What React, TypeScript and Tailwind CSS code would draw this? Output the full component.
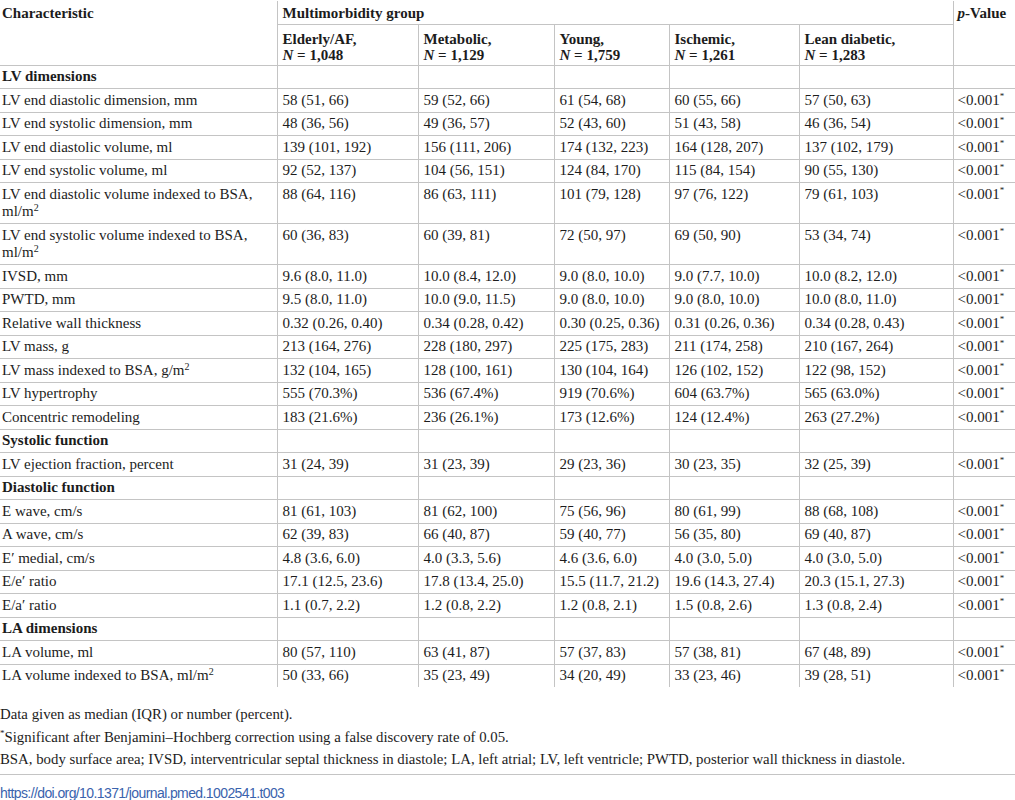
import React from "react";

type Row = {
  label: React.ReactNode;
  values?: string[];
  section?: boolean;
};

const P = (
  <>
    &lt;0.001<sup className="text-[9px] top-[-0.6em]">*</sup>
  </>
);

const m2 = <sup className="text-[10px] leading-none">2</sup>;

const rows: Row[] = [
  { label: "LV dimensions", section: true },
  { label: "LV end diastolic dimension, mm", values: ["58 (51, 66)", "59 (52, 66)", "61 (54, 68)", "60 (55, 66)", "57 (50, 63)"] },
  { label: "LV end systolic dimension, mm", values: ["48 (36, 56)", "49 (36, 57)", "52 (43, 60)", "51 (43, 58)", "46 (36, 54)"] },
  { label: "LV end diastolic volume, ml", values: ["139 (101, 192)", "156 (111, 206)", "174 (132, 223)", "164 (128, 207)", "137 (102, 179)"] },
  { label: "LV end systolic volume, ml", values: ["92 (52, 137)", "104 (56, 151)", "124 (84, 170)", "115 (84, 154)", "90 (55, 130)"] },
  { label: <>LV end diastolic volume indexed to BSA,<br />ml/m{m2}</>, values: ["88 (64, 116)", "86 (63, 111)", "101 (79, 128)", "97 (76, 122)", "79 (61, 103)"] },
  { label: <>LV end systolic volume indexed to BSA,<br />ml/m{m2}</>, values: ["60 (36, 83)", "60 (39, 81)", "72 (50, 97)", "69 (50, 90)", "53 (34, 74)"] },
  { label: "IVSD, mm", values: ["9.6 (8.0, 11.0)", "10.0 (8.4, 12.0)", "9.0 (8.0, 10.0)", "9.0 (7.7, 10.0)", "10.0 (8.2, 12.0)"] },
  { label: "PWTD, mm", values: ["9.5 (8.0, 11.0)", "10.0 (9.0, 11.5)", "9.0 (8.0, 10.0)", "9.0 (8.0, 10.0)", "10.0 (8.0, 11.0)"] },
  { label: "Relative wall thickness", values: ["0.32 (0.26, 0.40)", "0.34 (0.28, 0.42)", "0.30 (0.25, 0.36)", "0.31 (0.26, 0.36)", "0.34 (0.28, 0.43)"] },
  { label: "LV mass, g", values: ["213 (164, 276)", "228 (180, 297)", "225 (175, 283)", "211 (174, 258)", "210 (167, 264)"] },
  { label: <>LV mass indexed to BSA, g/m{m2}</>, values: ["132 (104, 165)", "128 (100, 161)", "130 (104, 164)", "126 (102, 152)", "122 (98, 152)"] },
  { label: "LV hypertrophy", values: ["555 (70.3%)", "536 (67.4%)", "919 (70.6%)", "604 (63.7%)", "565 (63.0%)"] },
  { label: "Concentric remodeling", values: ["183 (21.6%)", "236 (26.1%)", "173 (12.6%)", "124 (12.4%)", "263 (27.2%)"] },
  { label: "Systolic function", section: true },
  { label: "LV ejection fraction, percent", values: ["31 (24, 39)", "31 (23, 39)", "29 (23, 36)", "30 (23, 35)", "32 (25, 39)"] },
  { label: "Diastolic function", section: true },
  { label: "E wave, cm/s", values: ["81 (61, 103)", "81 (62, 100)", "75 (56, 96)", "80 (61, 99)", "88 (68, 108)"] },
  { label: "A wave, cm/s", values: ["62 (39, 83)", "66 (40, 87)", "59 (40, 77)", "56 (35, 80)", "69 (40, 87)"] },
  { label: "E\u2032 medial, cm/s", values: ["4.8 (3.6, 6.0)", "4.0 (3.3, 5.6)", "4.6 (3.6, 6.0)", "4.0 (3.0, 5.0)", "4.0 (3.0, 5.0)"] },
  { label: "E/e\u2032 ratio", values: ["17.1 (12.5, 23.6)", "17.8 (13.4, 25.0)", "15.5 (11.7, 21.2)", "19.6 (14.3, 27.4)", "20.3 (15.1, 27.3)"] },
  { label: "E/a\u2032 ratio", values: ["1.1 (0.7, 2.2)", "1.2 (0.8, 2.2)", "1.2 (0.8, 2.1)", "1.5 (0.8, 2.6)", "1.3 (0.8, 2.4)"] },
  { label: "LA dimensions", section: true },
  { label: "LA volume, ml", values: ["80 (57, 110)", "63 (41, 87)", "57 (37, 83)", "57 (38, 81)", "67 (48, 89)"] },
  { label: <>LA volume indexed to BSA, ml/m{m2}</>, values: ["50 (33, 66)", "35 (23, 49)", "34 (20, 49)", "33 (23, 46)", "39 (28, 51)"] },
];

const groups = [
  ["Elderly/AF,", "1,048"],
  ["Metabolic,", "1,129"],
  ["Young,", "1,759"],
  ["Ischemic,", "1,261"],
  ["Lean diabetic,", "1,283"],
];

const base = "border border-[#c4c4c4] px-[5px] text-left";
const cell = `${base} align-top py-[2.5px]`;

export default function App() {
  return (
    <div
      className="w-[1015px] bg-white text-[#1c1c1c] text-[15px] leading-[17.5px]"
      style={{ fontFamily: '"Liberation Serif", "Times New Roman", serif' }}
    >
      <table className="w-[1015px] table-fixed border-collapse border-hidden border-y border-y-[#c4c4c4] mt-px">
        <colgroup>
          <col className="w-[277px]" />
          <col className="w-[141px]" />
          <col className="w-[136px]" />
          <col className="w-[115px]" />
          <col className="w-[130px]" />
          <col className="w-[154px]" />
          <col className="w-[62px]" />
        </colgroup>
        <thead>
          <tr>
            <th rowSpan={2} className={`${base} align-top pt-[3.5px] pb-[2px] font-bold pl-[2px]`}>
              Characteristic
            </th>
            <th colSpan={5} className={`${base} align-top pt-[3.5px] pb-[1.5px] font-bold`}>
              Multimorbidity group
            </th>
            <th rowSpan={2} className={`${base} align-top pt-[3.5px] font-bold pl-[4px]`}>
              <i>p</i>-Value
            </th>
          </tr>
          <tr>
            {groups.map(([name, n]) => (
              <th
                key={name}
                className={`${base} align-bottom pt-[6px] pb-[1px] leading-[16.5px] font-bold`}
              >
                {name}
                <br />
                <i>N</i> = {n}
              </th>
            ))}
          </tr>
        </thead>
        <tbody>
          {rows.map((r, i) => (
            <tr key={i}>
              <td className={`${cell} pl-[2px] ${r.section ? "font-bold" : ""}`}>{r.label}</td>
              {r.section
                ? [0, 1, 2, 3, 4, 5].map((k) => <td key={k} className={cell}>&nbsp;</td>)
                : (
                  <>
                    {r.values!.map((v, k) => (
                      <td key={k} className={cell}>
                        {v}
                      </td>
                    ))}
                    <td className={`${cell} pl-[4px]`}>{P}</td>
                  </>
                )}
            </tr>
          ))}
        </tbody>
      </table>
      <div className="pt-[16px] leading-[22.5px] text-[14.8px]">
        <div>Data given as median (IQR) or number (percent).</div>
        <div>
          <sup className="text-[9px] top-[-0.6em]">*</sup>Significant after Benjamini–Hochberg correction using a false discovery rate of 0.05.
        </div>
        <div>
          BSA, body surface area; IVSD, interventricular septal thickness in diastole; LA, left atrial; LV, left ventricle; PWTD, posterior wall thickness in diastole.
        </div>
      </div>
      <div className="border-t border-[#c4c4c4] mt-[3px] pt-[8px]">
        <span
          className="text-[#3a63ad] text-[14px] leading-[20px] tracking-[-0.6px]"
          style={{ fontFamily: '"Liberation Sans", Arial, sans-serif' }}
        >
          https://doi.org/10.1371/journal.pmed.1002541.t003
        </span>
      </div>
    </div>
  );
}
